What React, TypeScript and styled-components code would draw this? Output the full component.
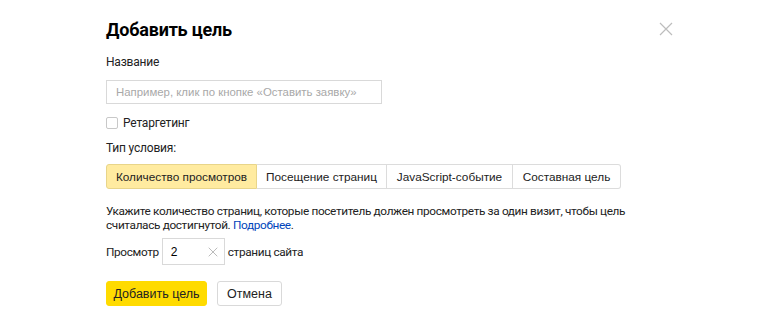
import React from "react";
import styled, { createGlobalStyle } from "styled-components";

const Global = createGlobalStyle`
  html, body { margin: 0; padding: 0; background: #fff; }
  body { font-family: "Liberation Sans", Arial, sans-serif; color: #000; }
  * { box-sizing: border-box; }
`;

const Page = styled.div`
  width: 773px;
  height: 327px;
  position: relative;
  padding: 18px 0 0 106px;
`;

const Close = styled.button`
  position: absolute;
  left: 657px;
  top: 20px;
  width: 18px;
  height: 18px;
  padding: 0;
  border: 0;
  background: none;
  display: flex;
  align-items: center;
  justify-content: center;
`;

const Title = styled.h1`
  margin: 0;
  font-family: Roboto, "Noto Sans", sans-serif;
  font-weight: 700;
  font-size: 18px;
  line-height: 24px;
  letter-spacing: -0.2px;
`;

const Label = styled.div<{ $mt: number }>`
  font-family: Roboto, sans-serif;
  font-size: 12px;
  line-height: 16px;
  color: #222;
  letter-spacing: -0.2px;
  margin-top: ${(p) => p.$mt}px;
`;

const NameInput = styled.div`
  margin-top: 10px;
  width: 276px;
  height: 24px;
  border: 1px solid #d9d9d9;
  display: flex;
  align-items: center;
  padding-left: 9px;
  font-size: 11.4px;
  color: #a8a8a8;
  white-space: nowrap;
  overflow: hidden;
`;

const CheckRow = styled.label`
  margin-top: 12px;
  display: flex;
  align-items: center;
  gap: 5px;
  font-family: Roboto, sans-serif;
  font-size: 12px;
  letter-spacing: -0.2px;
  color: #222;
`;

const Box = styled.span`
  width: 12px;
  height: 12px;
  border: 1px solid #c8c8c8;
  border-radius: 2px;
`;

const Tabs = styled.div`
  margin-top: 8px;
  display: flex;
  height: 25px;
`;

const Tab = styled.div<{ $active?: boolean; $first?: boolean; $last?: boolean; $w: number }>`
  width: ${(p) => p.$w}px;
  display: flex;
  align-items: center;
  justify-content: center;
  font-size: 11.8px;
  color: #222;
  border: 1px solid ${(p) => (p.$active ? "#e8d58a" : "#dcdcdc")};
  border-left-width: ${(p) => (p.$first ? 1 : 0)}px;
  background: ${(p) => (p.$active ? "#ffeba0" : "#fff")};
  border-radius: ${(p) => (p.$first ? "3px 0 0 3px" : p.$last ? "0 3px 3px 0" : "0")};
`;

const Text = styled.p`
  margin: 15px 0 0;
  width: 530px;
  font-family: Roboto, sans-serif;
  font-size: 11.8px;
  line-height: 14px;
  color: #222;
  letter-spacing: -0.35px;
`;

const Link = styled.a`
  color: #0044bb;
  text-decoration: none;
`;

const ViewRow = styled.div`
  margin-top: 6px;
  display: flex;
  align-items: center;
  gap: 3px;
  font-family: Roboto, sans-serif;
  font-size: 11.8px;
  color: #222;
  letter-spacing: -0.35px;
`;

const SmallInput = styled.div`
  width: 63px;
  height: 27px;
  border: 1px solid #d9d9d9;
  display: flex;
  align-items: center;
  justify-content: space-between;
  padding: 0 6px 0 8px;
  font-family: "Liberation Sans", Arial, sans-serif;
  font-size: 12px;
  letter-spacing: 0;
  color: #000;
`;

const Buttons = styled.div`
  margin-top: 16px;
  display: flex;
  gap: 10px;
`;

const Btn = styled.button<{ $primary?: boolean; $w: number }>`
  width: ${(p) => p.$w}px;
  height: 25px;
  padding: 0;
  border-radius: 3px;
  border: 1px solid ${(p) => (p.$primary ? "#ffdb00" : "#d9d9d9")};
  background: ${(p) => (p.$primary ? "#ffdb00" : "#fff")};
  font-family: "Liberation Sans", Arial, sans-serif;
  font-size: 12.5px;
  color: #222;
`;

const X = ({ size, color }: { size: number; color: string }) => (
  <svg width={size} height={size} viewBox="0 0 14 14">
    <path d="M1 1L13 13M13 1L1 13" stroke={color} strokeWidth="1.2" />
  </svg>
);

export default function App() {
  return (
    <Page>
      <Global />
      <Close aria-label="close">
        <X size={14} color="#bdbdbd" />
      </Close>
      <Title>Добавить цель</Title>
      <Label $mt={12}>Название</Label>
      <NameInput>Например, клик по кнопке «Оставить заявку»</NameInput>
      <CheckRow>
        <Box />
        Ретаргетинг
      </CheckRow>
      <Label $mt={10}>Тип условия:</Label>
      <Tabs>
        <Tab $active $first $w={151}>Количество просмотров</Tab>
        <Tab $w={130}>Посещение страниц</Tab>
        <Tab $w={126}>JavaScript-событие</Tab>
        <Tab $last $w={108}>Составная цель</Tab>
      </Tabs>
      <Text>
        Укажите количество страниц, которые посетитель должен просмотреть за один визит, чтобы цель
        считалась достигнутой. <Link href="#">Подробнее</Link>.
      </Text>
      <ViewRow>
        Просмотр
        <SmallInput>
          2
          <X size={10} color="#b0b0b0" />
        </SmallInput>
        страниц сайта
      </ViewRow>
      <Buttons>
        <Btn $primary $w={101}>Добавить цель</Btn>
        <Btn $w={65}>Отмена</Btn>
      </Buttons>
    </Page>
  );
}
